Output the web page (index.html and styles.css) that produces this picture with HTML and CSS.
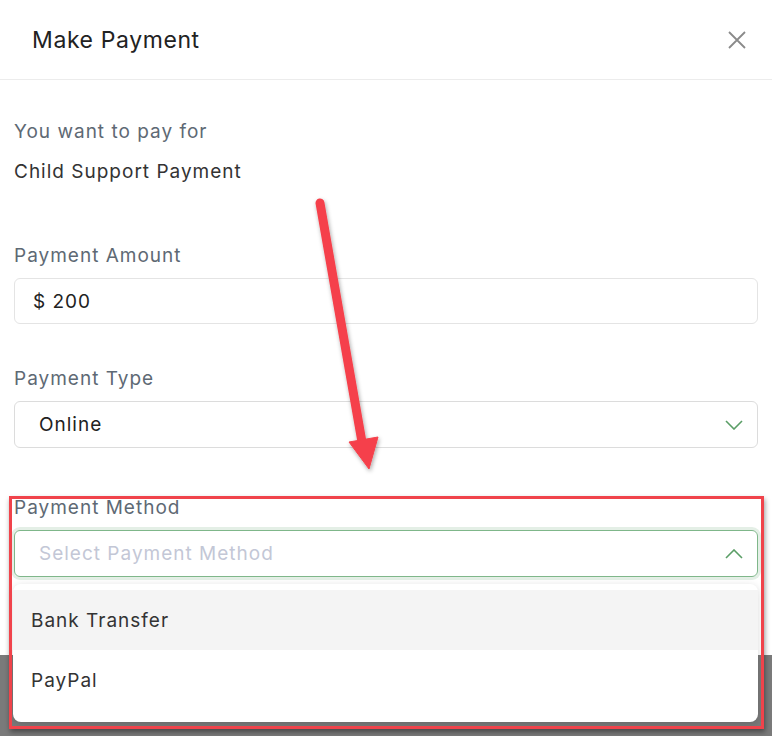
FILE: index.html
```html
<!DOCTYPE html>
<html lang="en">

<head>
    <meta charset="UTF-8" />
    <meta name="viewport" content="width=device-width, initial-scale=1.0" />
    <title>Make Payment</title>
    <link rel="stylesheet" href="styles.css">
</head>

<body>
    <div class="modal">
        <div class="modal-header">
            <h2>Make Payment</h2>
            <button class="close" aria-label="Close">
                <svg width="18" height="18" viewBox="0 0 18 18">
                    <path d="M1 1 L17 17 M17 1 L1 17" stroke="#8a8a8a" stroke-width="1.8" fill="none" />
                </svg>
            </button>
        </div>

        <div class="modal-body">
            <p class="muted">You want to pay for</p>
            <p class="value">Child Support Payment</p>

            <div class="field field-amount">
                <label>Payment Amount</label>
                <div class="input">$ 200</div>
            </div>

            <div class="field field-type">
                <label>Payment Type</label>
                <div class="input select">
                    <span>Online</span>
                    <svg class="chevron" width="18" height="10" viewBox="0 0 18 10">
                        <path d="M1 1 L9 9 L17 1" stroke="#5a9e66" stroke-width="1.6" fill="none" />
                    </svg>
                </div>
            </div>

            <div class="field field-method">
                <label>Payment Method</label>
                <div class="input select open">
                    <span class="placeholder">Select Payment Method</span>
                    <svg class="chevron" width="18" height="10" viewBox="0 0 18 10">
                        <path d="M1 9 L9 1 L17 9" stroke="#5a9e66" stroke-width="1.6" fill="none" />
                    </svg>
                </div>
                <ul class="menu">
                    <li class="active">Bank Transfer</li>
                    <li>PayPal</li>
                </ul>
            </div>
        </div>
    </div>

    <div class="highlight"></div>

    <svg class="arrow" width="772" height="736" viewBox="0 0 772 736">
        <defs>
            <filter id="shadow" x="-20%" y="-20%" width="140%" height="140%">
                <feDropShadow dx="1" dy="2" stdDeviation="2" flood-color="#000" flood-opacity="0.35" />
            </filter>
        </defs>
        <g filter="url(#shadow)" fill="#f5414b" stroke="#f5414b">
            <line x1="320" y1="203" x2="362" y2="442" stroke-width="9" stroke-linecap="round" />
            <polygon points="349,442 378,437 369,469" stroke-width="1" stroke-linejoin="round" />
        </g>
    </svg>
</body>

</html>
```

FILE: styles.css
```css
* {
    box-sizing: border-box;
}

body {
    margin: 0;
    padding: 0;
    font-family: Inter, 'Noto Sans', sans-serif;
    background: #7a7a7a;
    width: 772px;
    height: 736px;
    overflow: hidden;
}

.modal {
    background: #fff;
    height: 655px;
}

.modal-header {
    display: flex;
    align-items: center;
    justify-content: space-between;
    height: 80px;
    padding: 0 26px 0 32px;
    border-bottom: 1px solid #ececec;
}

.modal-header h2 {
    margin: 0;
    font-size: 23px;
    font-weight: 400;
    letter-spacing: 0.6px;
    color: #222;
}

.close {
    background: none;
    border: none;
    padding: 0;
    width: 18px;
    height: 18px;
    cursor: pointer;
}

.modal-body {
    padding: 40px 14px 0 14px;
}

p {
    margin: 0;
    font-size: 19px;
    line-height: 24px;
    letter-spacing: 1px;
}

.muted {
    color: #5e6974;
    margin-bottom: 16px;
}

.value {
    color: #333;
}

.field {
    position: relative;
}

.field label {
    display: block;
    font-size: 19px;
    line-height: 24px;
    letter-spacing: 1px;
    color: #5e6974;
    margin-bottom: 10px;
}

.field-amount {
    margin-top: 60px;
}

.field-type {
    margin-top: 43px;
}

.field-method {
    margin-top: 48px;
}

.input {
    display: flex;
    align-items: center;
    height: 46px;
    padding: 0 18px;
    border: 1px solid #e4e4e4;
    border-radius: 6px;
    font-size: 19px;
    letter-spacing: 1px;
    color: #222;
}

.select {
    justify-content: space-between;
    padding: 0 14px 0 24px;
    height: 47px;
    border-color: #dcdcdc;
}

.select.open {
    border-color: #7fb78a;
    box-shadow: 0 0 0 3px #e4efe6;
}

.placeholder {
    color: #c3c7d6;
}

.menu {
    position: absolute;
    left: -1px;
    right: 0;
    top: calc(100% + 7px);
    list-style: none;
    margin: 0;
    padding: 6px 0 12px 0;
    background: #fff;
    border-radius: 8px;
    box-shadow: 0 2px 8px rgba(0, 0, 0, 0.15);
}

.menu li {
    height: 60px;
    display: flex;
    align-items: center;
    padding-left: 18px;
    font-size: 19px;
    letter-spacing: 1px;
    color: #333;
}

.menu li.active {
    background: #f4f4f4;
}

.highlight {
    position: absolute;
    left: 9px;
    top: 496px;
    width: 755px;
    height: 233px;
    border: 3px solid #f0434b;
    box-shadow: 1px 3px 5px rgba(0, 0, 0, 0.4);
    pointer-events: none;
}

.arrow {
    position: absolute;
    left: 0;
    top: 0;
    pointer-events: none;
}
```
